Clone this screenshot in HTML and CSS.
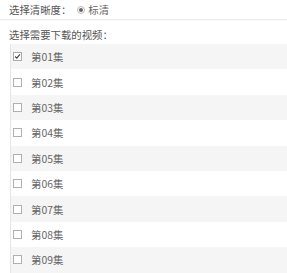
FILE: index.html
```html
<!DOCTYPE html>
<html lang="zh-CN">
<head>
<meta charset="utf-8">
<link rel="stylesheet" href="styles.css">
</head>
<body>
<div class="quality">
  <span class="label">选择清晰度：</span>
  <span class="radio"><span class="dot"></span></span>
  <span class="opt">标清</span>
</div>
<div class="label2">选择需要下载的视频：</div>
<div class="list">
  <div class="row"><span class="cb checked"><svg width="9" height="9" viewBox="0 0 9 9"><path d="M1.5 4.5 L3.6 6.6 L7.6 1.8" fill="none" stroke="#444" stroke-width="1.5"/></svg></span><span class="ep">第01集</span></div>
  <div class="row"><span class="cb"></span><span class="ep">第02集</span></div>
  <div class="row"><span class="cb"></span><span class="ep">第03集</span></div>
  <div class="row"><span class="cb"></span><span class="ep">第04集</span></div>
  <div class="row"><span class="cb"></span><span class="ep">第05集</span></div>
  <div class="row"><span class="cb"></span><span class="ep">第06集</span></div>
  <div class="row"><span class="cb"></span><span class="ep">第07集</span></div>
  <div class="row"><span class="cb"></span><span class="ep">第08集</span></div>
  <div class="row"><span class="cb"></span><span class="ep">第09集</span></div>
</div>
</body>
</html>
```
FILE: styles.css
```css
html, body {
  margin: 0;
  padding: 0;
  background: #fff;
  overflow: hidden;
}
body {
  font-family: "Noto Sans CJK SC", "Noto Sans", sans-serif;
  font-size: 10.4px;
  color: #555;
}
.quality {
  display: flex;
  align-items: center;
  height: 19px;
  padding-left: 9px;
  border-bottom: 1px solid #ececec;
  box-shadow: 0 1px 0 #fafafa;
}
.label {
  color: #555;
}
.radio {
  width: 6px;
  height: 6px;
  border: 1px solid #bbb;
  border-radius: 50%;
  margin-left: 6px;
  display: flex;
  align-items: center;
  justify-content: center;
}
.dot {
  width: 4px;
  height: 4px;
  border-radius: 50%;
  background: #666;
}
.opt {
  margin-left: 3px;
  color: #666;
}
.label2 {
  height: 24px;
  padding-left: 9px;
  padding-top: 4px;
  box-sizing: border-box;
  display: flex;
  align-items: center;
  color: #555;
}
.list {
  margin-left: 10px;
  border-left: 1px solid #e6e6e6;
}
.row {
  height: 25.4px;
  display: flex;
  align-items: center;
  padding-left: 2px;
  background: #fff;
}
.row:nth-child(odd) {
  background: #f5f5f5;
}
.cb {
  width: 7px;
  height: 7px;
  border: 1px solid #b0b0b0;
  background: #fff;
  display: flex;
  align-items: center;
  justify-content: center;
}
.cb.checked {
  border-color: #aaa;
}
.cb svg {
  display: block;
}
.ep {
  margin-left: 9px;
  color: #666;
}
```
